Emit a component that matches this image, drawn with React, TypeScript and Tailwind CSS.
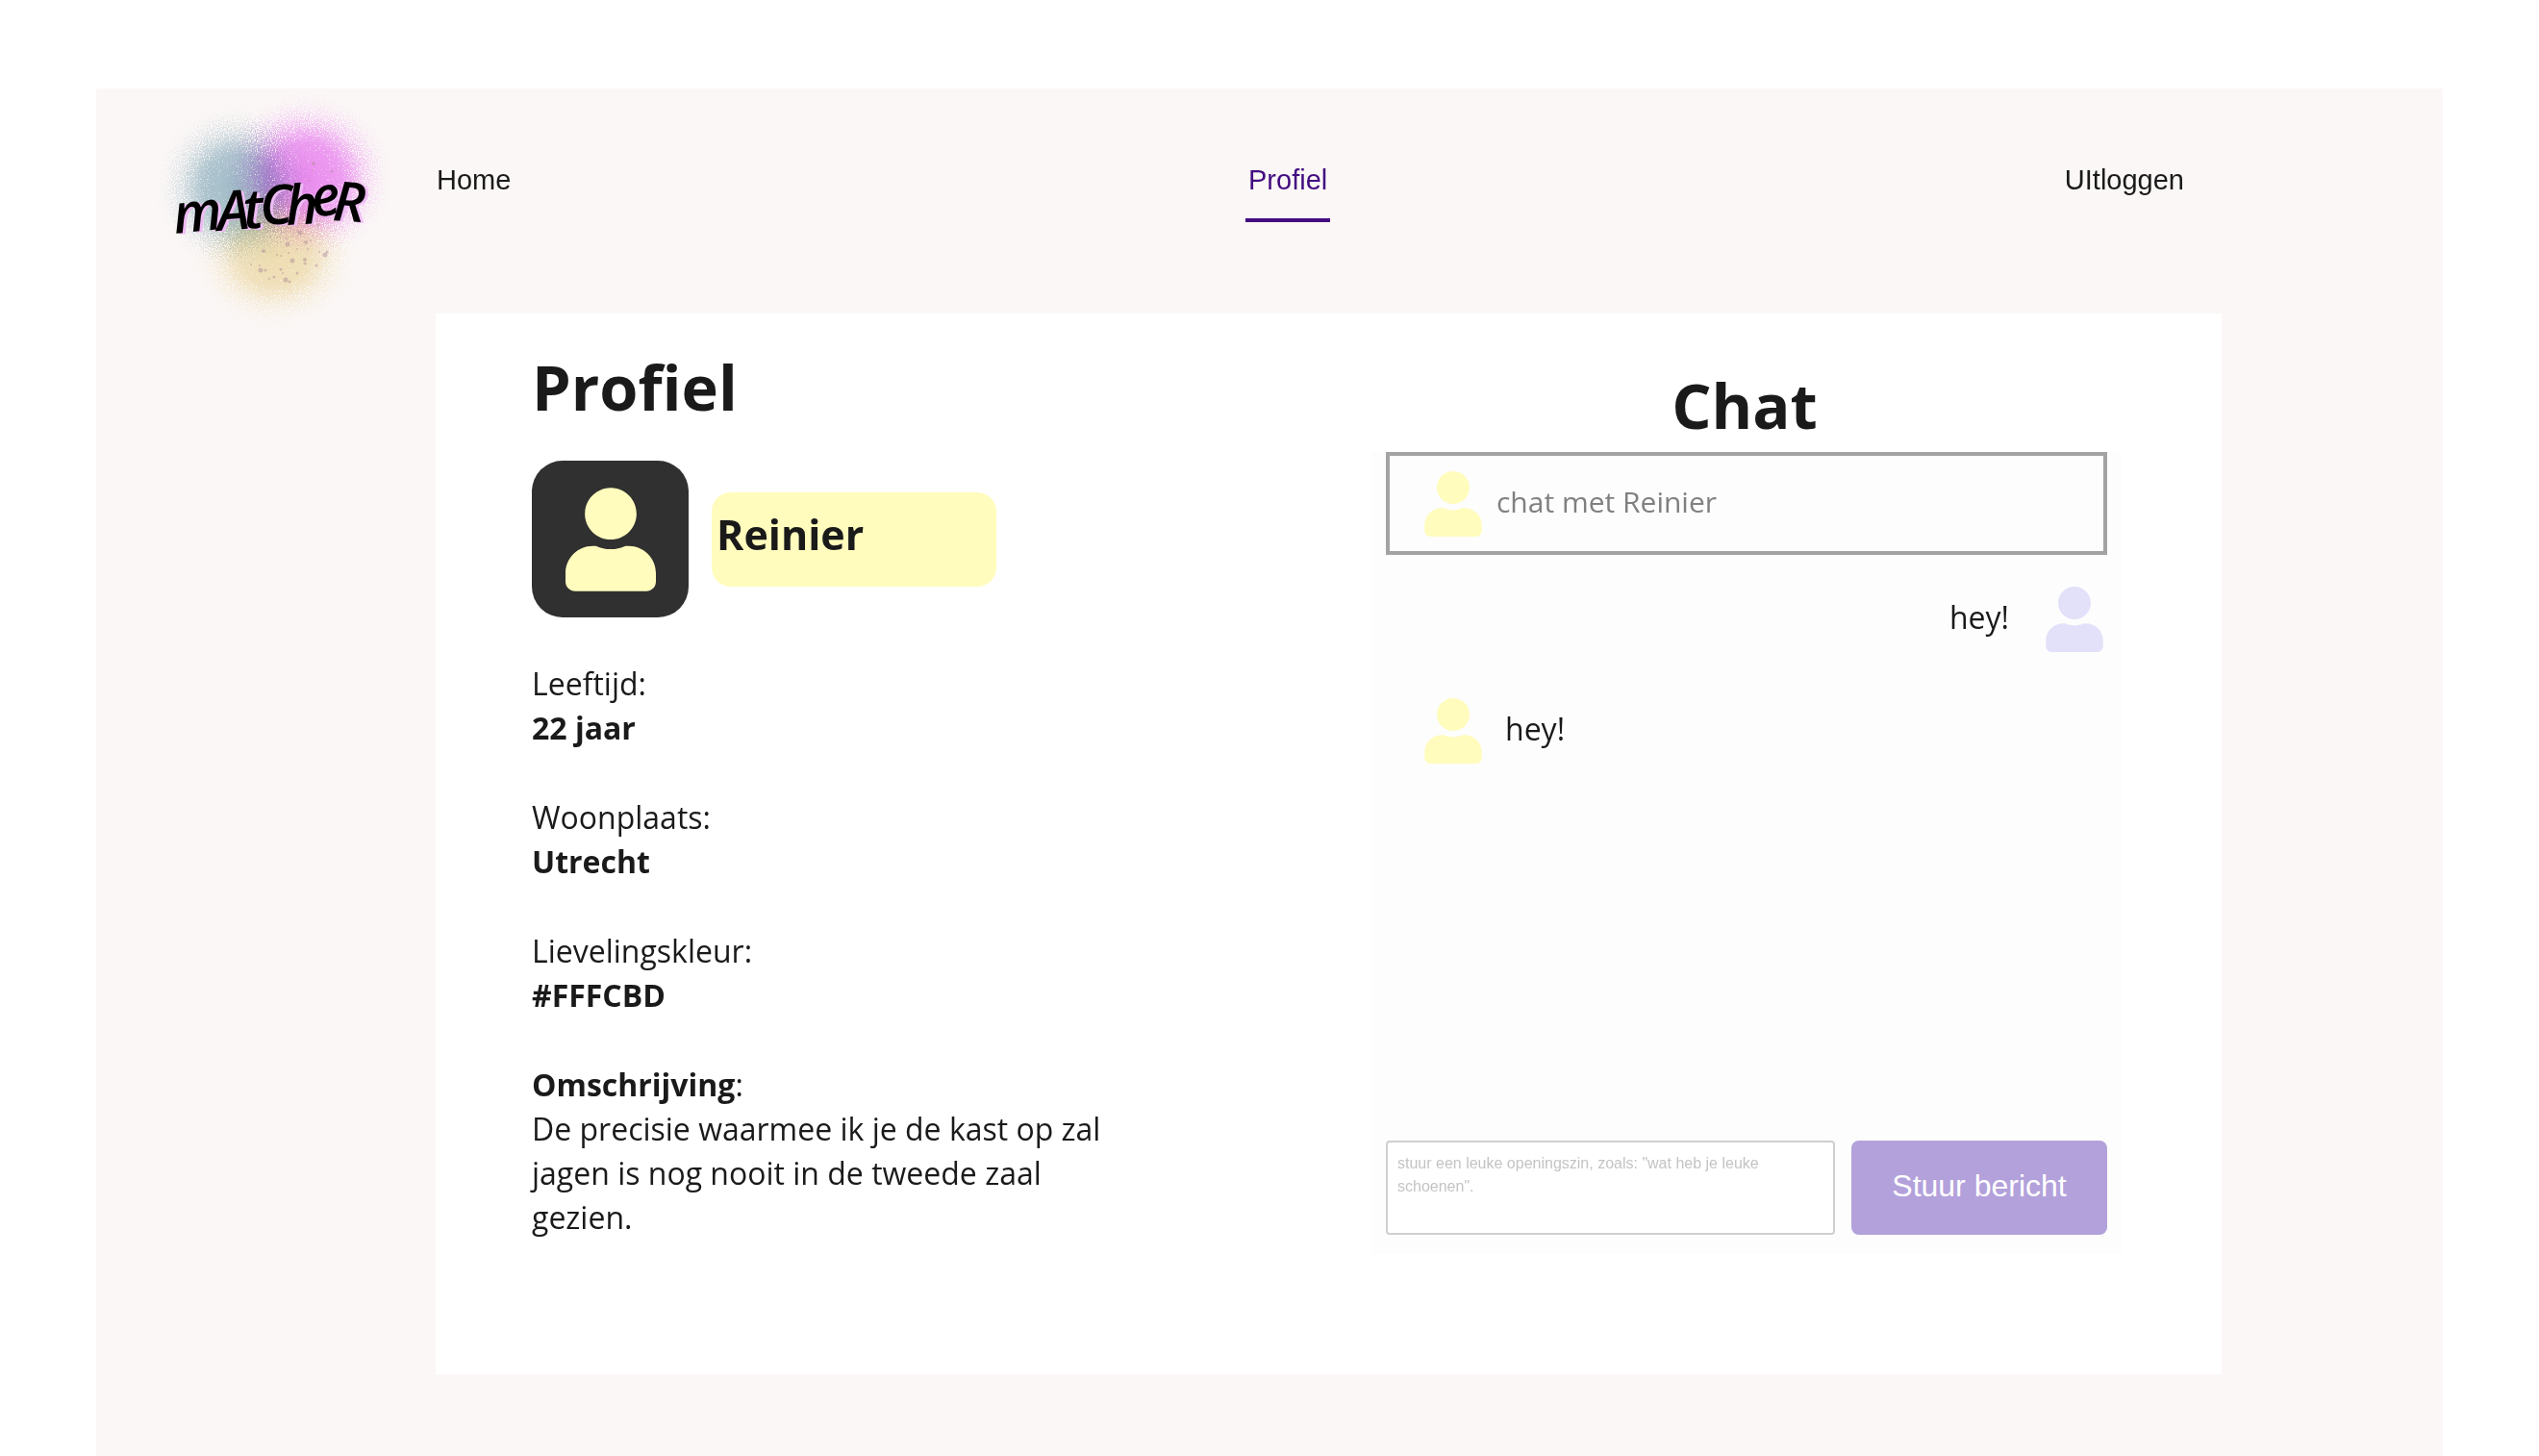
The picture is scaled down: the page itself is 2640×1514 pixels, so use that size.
import React from "react";

function UserIcon({ className }: { className: string }) {
  return (
    <svg viewBox="0 0 448 512" fill="currentColor" className={className} aria-hidden="true">
      <path d="M224 256c70.7 0 128-57.3 128-128S294.7 0 224 0 96 57.3 96 128s57.3 128 128 128zm89.6 32h-16.7c-22.2 10.2-46.9 16-72.9 16s-50.6-5.8-72.9-16h-16.7C60.2 288 0 348.2 0 422.4V464c0 26.5 21.5 48 48 48h352c26.5 0 48-21.5 48-48v-41.6c0-74.2-60.2-134.4-134.4-134.4z" />
    </svg>
  );
}

/* Paint specks scattered over the lower half of the logo: x, y, radius */
const specks: [number, number, number][] = [
  [326, 170, 2], [325, 177, 1], [345, 178, 1.5], [322, 188, 1], [308, 196, 2], [307, 198, 1],
  [312, 242, 2.5], [331, 234, 1.5], [318, 252, 2], [299, 254, 2.5], [298, 248, 1], [274, 261, 2],
  [338, 265, 2.5], [340, 262, 1.5], [304, 271, 2.5], [317, 270, 2], [317, 274, 1.5], [329, 276, 1.5],
  [271, 281, 2.5], [276, 281, 1.5], [261, 275, 1], [270, 276, 1], [292, 280, 1.5], [294, 284, 1],
  [309, 284, 1.5], [285, 288, 1.5], [280, 290, 1], [297, 291, 2.5], [301, 293, 1.5], [292, 266, 1],
  [288, 265, 1], [309, 259, 1], [300, 263, 1], [320, 259, 1], [323, 250, 1], [332, 262, 1],
];

function SprayGradient({ id, color }: { id: string; color: string }) {
  return (
    <radialGradient id={id}>
      <stop offset="0" stopColor={color} />
      <stop offset="0.4" stopColor={color} stopOpacity="0.85" />
      <stop offset="0.65" stopColor={color} stopOpacity="0.45" />
      <stop offset="1" stopColor={color} stopOpacity="0" />
    </radialGradient>
  );
}

function Logo() {
  return (
    <svg viewBox="170 110 230 230" className="h-[230px] w-[230px] overflow-visible" role="img" aria-label="Matcher">
      <defs>
        <filter id="grain" x="0" y="0" width="1" height="1" colorInterpolationFilters="sRGB">
          <feTurbulence type="fractalNoise" baseFrequency="0.8" numOctaves="2" seed="4" />
          <feColorMatrix values="0 0 0 0 0  0 0 0 0 0  0 0 0 0 0  1 0 0 0 0" result="noise" />
          <feComposite in="SourceAlpha" in2="noise" operator="arithmetic" k2="2" k3="4" k4="-2.2" result="dots" />
          <feComposite in="SourceGraphic" in2="dots" operator="in" />
        </filter>
        <SprayGradient id="blue" color="#a3c2cf" />
        <SprayGradient id="pink" color="#ee90f8" />
        <SprayGradient id="yellow" color="#f2e4b6" />
      </defs>
      <g className="mix-blend-multiply">
        <ellipse cx="246" cy="196" rx="86" ry="88" fill="url(#blue)" filter="url(#grain)" />
      </g>
      <g className="mix-blend-multiply">
        <ellipse cx="318" cy="184" rx="92" ry="88" fill="url(#pink)" filter="url(#grain)" />
      </g>
      <g className="mix-blend-multiply">
        <ellipse cx="286" cy="264" rx="90" ry="80" fill="url(#yellow)" filter="url(#grain)" />
      </g>
      <g fill="#b08f98" opacity="0.5">
        {specks.map(([x, y, r]) => (
          <circle key={`${x}-${y}`} cx={x} cy={y} r={r} />
        ))}
      </g>
      <text
        className="font-['Open_Sans',sans-serif] text-[57px] font-semibold italic drop-shadow-[3px_1px_0_#eebcf4]"
        x="182 227 254 271 298 326 345"
        y="243 240 238 234 234 226 229"
        rotate="-6 -4 -4 -3 -3 -8 4"
      >
        mAtCheR
      </text>
    </svg>
  );
}

function NavLink({ label, active = false }: { label: string; active?: boolean }) {
  return (
    <a
      href="#"
      aria-current={active ? "page" : undefined}
      className={
        active
          ? "h-16 border-b-4 border-[#430d80] px-[3px] text-[#430d80]"
          : "h-16 border-b-4 border-transparent px-[3px] text-[#1a1a1a]"
      }
    >
      {label}
    </a>
  );
}

const facts = [
  { term: "Leeftijd:", value: "22 jaar" },
  { term: "Woonplaats:", value: "Utrecht" },
  { term: "Lievelingskleur:", value: "#FFFCBD" },
];

function Profile() {
  return (
    <section className="flex w-[620px] flex-col pt-[31px]">
      <h1 className="text-[65px] leading-[90px] font-bold">Profiel</h1>
      <div className="mt-8 flex items-center gap-6">
        <div className="flex size-[163px] items-center justify-center rounded-[32px] bg-[#303030]">
          <UserIcon className="h-[108px] w-[94px] text-[#fffcbd]" />
        </div>
        <h2 className="h-[98px] w-[296px] rounded-[20px] bg-[#fffcbd] px-[5px] pt-[14px] text-[43px] leading-[60px] font-bold">
          Reinier
        </h2>
      </div>
      <dl className="mt-[46px] flex flex-col gap-[47px] text-[32px] leading-[46px]">
        {facts.map((f) => (
          <div key={f.term}>
            <dt>{f.term}</dt>
            <dd className="font-bold">{f.value}</dd>
          </div>
        ))}
        <div>
          <dt>
            <strong>Omschrijving</strong>:
          </dt>
          <dd>De precisie waarmee ik je de kast op zal jagen is nog nooit in de tweede zaal gezien.</dd>
        </div>
      </dl>
    </section>
  );
}

function Chat() {
  return (
    <section className="flex w-[780px] flex-col pt-[50px]">
      <h2 className="pr-1 text-center text-[65px] leading-[90px] font-bold">Chat</h2>
      <div className="mt-1 flex grow flex-col bg-[#fdfdfd] px-[15px] pb-5">
        <div className="flex h-[107px] items-center gap-[15px] border-4 border-[#a3a3a3] pl-9">
          <UserIcon className="h-[68px] w-[60px] text-[#fffcbd]" />
          <p className="pb-1 text-[30px] text-[#808080]">chat met Reinier</p>
        </div>
        <ul className="mt-[33px] flex grow flex-col gap-12 text-[32px] leading-[46px]">
          <li className="flex items-center justify-end gap-[38px] pr-1">
            <p className="pb-1">hey!</p>
            <UserIcon className="h-[68px] w-[60px] text-[#e2e1f9]" />
          </li>
          <li className="flex items-center gap-6 pl-10">
            <UserIcon className="h-[68px] w-[60px] text-[#fffcbd]" />
            <p className="pb-1">hey!</p>
          </li>
        </ul>
        <form
          className="flex h-[98px] gap-[17px] font-['Liberation_Sans',sans-serif]"
          onSubmit={(e) => e.preventDefault()}
        >
          <textarea
            aria-label="Bericht"
            placeholder={'stuur een leuke openingszin, zoals: "wat heb je leuke schoenen".'}
            className="min-w-0 grow resize-none rounded-[4px] border-2 border-[#cfcfcf] bg-white px-[10px] py-[10px] text-[16px] leading-6 placeholder:text-[#c4c4c4]"
          />
          <button type="submit" className="w-[266px] rounded-lg bg-[#b3a1db] pb-1 text-[32px] text-white">
            Stuur bericht
          </button>
        </form>
      </div>
    </section>
  );
}

export default function App() {
  return (
    <div className="flex min-h-screen flex-col bg-white px-[100px] pt-[92px] font-['Open_Sans',sans-serif] text-[#1a1a1a]">
      <div className="flex grow bg-[#fbf7f6] pr-[230px]">
        <div className="w-[353px] shrink-0 pt-[18px] pl-[70px]">
          <Logo />
        </div>
        <div className="grow pb-[85px]">
          <nav className="-ml-[2px] flex h-[234px] items-start justify-between pt-[75px] pr-9 font-['Liberation_Sans',sans-serif] text-[29px] leading-[40px]">
            <NavLink label="Home" />
            <NavLink label="Profiel" active />
            <NavLink label="UItloggen" />
          </nav>
          <main className="flex min-h-[1103px] justify-between bg-white pr-[104px] pb-[125px] pl-[100px]">
            <Profile />
            <Chat />
          </main>
        </div>
      </div>
    </div>
  );
}
